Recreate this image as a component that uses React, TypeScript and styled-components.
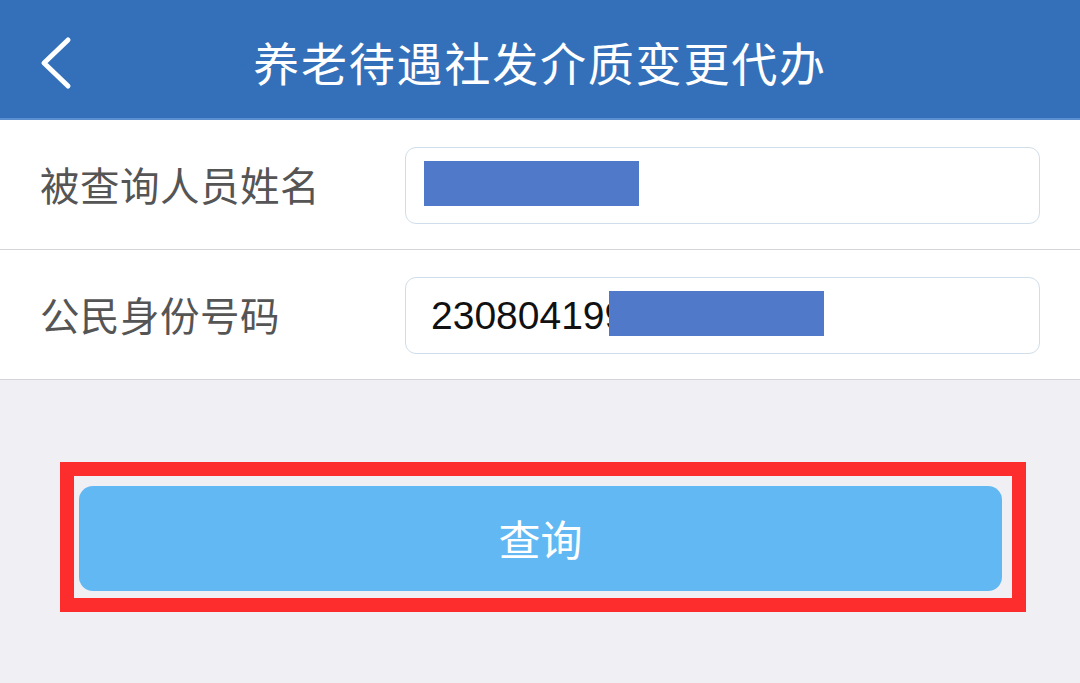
import * as React from "react";
import styled, { createGlobalStyle } from "styled-components";

const GlobalStyle = createGlobalStyle`
  html, body {
    margin: 0;
    padding: 0;
    background: #efeff4;
    font-family: "Noto Sans CJK SC", "Noto Sans", sans-serif;
  }
`;

const Page = styled.div`
  min-height: 683px;
  background: #efeff4;
`;

const Header = styled.header`
  display: grid;
  grid-template-columns: 1fr auto 1fr;
  align-items: center;
  height: 118px;
  background: #3370b9;
  border-bottom: 2px solid #5b8fcf;
`;

const BackButton = styled.button`
  justify-self: start;
  display: flex;
  align-items: center;
  margin: 8px 0 0 36px;
  padding: 0;
  border: 0;
  background: transparent;
  cursor: pointer;
`;

const Title = styled.h1`
  margin: 0;
  padding-top: 4px;
  font-size: 46px;
  font-weight: 400;
  letter-spacing: 1.8px;
  color: #ffffff;
`;

const Form = styled.section`
  background: #ffffff;
`;

const Row = styled.div`
  display: grid;
  grid-template-columns: 365px 635px;
  align-items: center;
  height: 129px;
  padding-left: 40px;
  border-bottom: 1px solid #d4d4d8;
`;

const Label = styled.label`
  font-size: 39.5px;
  letter-spacing: 0.5px;
  color: #555555;
  padding-bottom: 2px;
`;

const Field = styled.div<{ $pad: number }>`
  display: flex;
  align-items: center;
  box-sizing: border-box;
  height: 77px;
  margin-top: 2px;
  padding-left: ${(p) => p.$pad}px;
  border: 1.5px solid #d0deeb;
  border-radius: 11px;
  background: #ffffff;
`;

const Digits = styled.span`
  font-family: "Liberation Sans", Arial, sans-serif;
  font-size: 39px;
  color: #111111;
`;

const Mask = styled.span<{ $shift?: number }>`
  display: inline-block;
  width: 215px;
  height: 45px;
  margin-top: -5px;
  margin-left: ${(p) => p.$shift ?? 0}px;
  background: #5079c9;
`;

const Actions = styled.div`
  padding: 82px 54px 0 60px;
`;

const Highlight = styled.div`
  border: 14px solid #fd2d2d;
  padding: 10px 10px 7px 5px;
`;

const QueryButton = styled.button`
  display: flex;
  align-items: center;
  justify-content: center;
  width: 100%;
  height: 105px;
  padding-bottom: 4px;
  border: 0;
  border-radius: 14px;
  background: #62b8f3;
  color: #ffffff;
  font-family: "Noto Sans CJK SC", sans-serif;
  font-size: 42px;
  cursor: pointer;
`;

const Chevron = () => (
  <svg width="40" height="56" viewBox="0 0 40 56">
    <path
      d="M32 5 L8 28 L32 51"
      fill="none"
      stroke="#ffffff"
      strokeWidth="5"
      strokeLinecap="round"
      strokeLinejoin="round"
    />
  </svg>
);

export default function App() {
  return (
    <Page>
      <GlobalStyle />
      <Header>
        <BackButton aria-label="返回">
          <Chevron />
        </BackButton>
        <Title>养老待遇社发介质变更代办</Title>
        <span />
      </Header>
      <Form>
        <Row>
          <Label>被查询人员姓名</Label>
          <Field $pad={18}>
            <Mask />
          </Field>
        </Row>
        <Row>
          <Label>公民身份号码</Label>
          <Field $pad={25}>
            <Digits>230804199</Digits>
            <Mask $shift={-17} />
          </Field>
        </Row>
      </Form>
      <Actions>
        <Highlight>
          <QueryButton>查询</QueryButton>
        </Highlight>
      </Actions>
    </Page>
  );
}
